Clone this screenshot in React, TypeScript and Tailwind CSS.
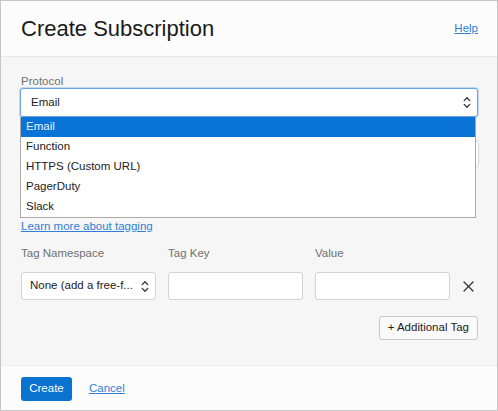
import React from "react";

const Chevrons = () => (
  <svg width="8" height="13" viewBox="0 0 8 13" fill="none" stroke="#333" strokeWidth="1.3" strokeLinecap="round" strokeLinejoin="round">
    <path d="M1.2 4.6 L4 1.8 L6.8 4.6" />
    <path d="M1.2 8.4 L4 11.2 L6.8 8.4" />
  </svg>
);

export default function App() {
  const items = ["Email", "Function", "HTTPS (Custom URL)", "PagerDuty", "Slack"];
  return (
    <div
      className="w-[498px] h-[411px] border border-[#c6c6c6] flex flex-col text-[11.5px] text-[#333]"
      style={{ fontFamily: '"Liberation Sans", Arial, sans-serif' }}
    >
      <div className="h-[56px] shrink-0 bg-[#fcfcfc] border-b border-[#e8e8e8] flex items-center justify-between pl-[20px] pr-[19px]">
        <div className="text-[22px] text-[#1a1a1a] leading-none">Create Subscription</div>
        <a className="text-[11.5px] text-[#2f7fd7] underline">Help</a>
      </div>

      <div className="flex-1 bg-[#f6f6f6] px-[19px] pt-[17px] flex flex-col">
        <div className="text-[#707070] leading-[14px] pl-[1px]">Protocol</div>
        <div className="relative mt-[0px]">
          <div className="h-[29px] bg-white border border-[#6aa2e0] rounded-[3px] shadow-[0_0_0_1px_rgba(106,162,224,0.35)] flex items-center justify-between pl-[10px] pr-[6px]">
            <span className="text-[#222]">Email</span>
            <Chevrons />
          </div>
          <div className="absolute left-0 right-[2px] top-[29px] bg-white border border-[#a9a9a9] border-t-0 z-10">
            {items.map((it, i) => (
              <div
                key={it}
                className={
                  "h-[20px] flex items-center pl-[5px] " +
                  (i === 0 ? "bg-[#0a74d6] text-[#e8f1fb]" : "text-[#222]")
                }
              >
                {it}
              </div>
            ))}
          </div>
          <div className="mt-[23px] h-[27px] bg-white border border-[#d6d6d6] rounded-[3px] mr-[-1px]" />
        </div>

        <a className="mt-[52px] leading-[14px] text-[#2f7fd7] underline self-start pl-[1px]">
          Learn more about tagging
        </a>

        <div className="mt-[13px] flex items-center gap-[12px] pl-[1px]">
          <div className="w-[135px] text-[#707070] leading-[14px]">Tag Namespace</div>
          <div className="w-[135px] text-[#707070] leading-[14px]">Tag Key</div>
          <div className="w-[135px] text-[#707070] leading-[14px]">Value</div>
        </div>

        <div className="mt-[12px] flex items-center gap-[12px] pl-[1px]">
          <div className="w-[135px] h-[28px] bg-white border border-[#d3d3d3] rounded-[3px] flex items-center justify-between pl-[8px] pr-[6px]">
            <span className="text-[#222]">None (add a free-f...</span>
            <Chevrons />
          </div>
          <div className="w-[135px] h-[28px] bg-white border border-[#d3d3d3] rounded-[3px]" />
          <div className="w-[135px] h-[28px] bg-white border border-[#d3d3d3] rounded-[3px]" />
          <svg className="ml-[1px]" width="11" height="11" viewBox="0 0 11 11" stroke="#333" strokeWidth="1.3" strokeLinecap="round">
            <path d="M1 1 L10 10 M10 1 L1 10" />
          </svg>
        </div>

        <div className="mt-[16px] flex justify-end">
          <button className="h-[24px] px-[8px] bg-[#fafafa] border border-[#c8c8c8] rounded-[3px] text-[#222] text-[11.5px]">
            + Additional Tag
          </button>
        </div>
      </div>

      <div className="h-[45px] shrink-0 bg-[#fcfcfc] border-t border-[#ececec] flex items-start pt-[11px] pl-[20px] gap-[17px]">
        <button className="h-[24px] w-[51px] bg-[#0a72cf] rounded-[3px] text-white text-[11.5px]">Create</button>
        <a className="h-[24px] flex items-center text-[#2f7fd7] underline">Cancel</a>
      </div>
    </div>
  );
}
